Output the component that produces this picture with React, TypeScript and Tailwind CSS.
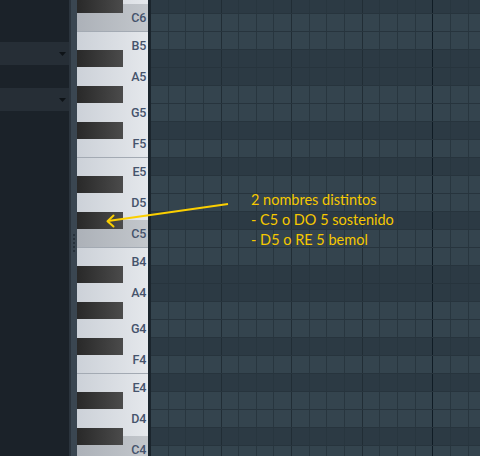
import React from "react";

const SCALE = [0, 2, 3, 5, 7, 8, 11]; // C harmonic minor highlight

// rows from C#6 (85) down to C4 (60)
const rows = Array.from({ length: 26 }, (_, i) => 85 - i);

// visible white keys, top to bottom (first one is cut off)
const whiteKeys = [
  { name: "D6", h: "h-[9px]", label: false },
  { name: "C6", h: "h-[27px]", label: true },
  { name: "B5", h: "h-[27px]", label: true },
  { name: "A5", h: "h-[36px]", label: true },
  { name: "G5", h: "h-[36px]", label: true },
  { name: "F5", h: "h-[27px]", label: true },
  { name: "E5", h: "h-[27px]", label: true },
  { name: "D5", h: "h-[36px]", label: true },
  { name: "C5", h: "h-[27px]", label: true },
  { name: "B4", h: "h-[27px]", label: true },
  { name: "A4", h: "h-[36px]", label: true },
  { name: "G4", h: "h-[36px]", label: true },
  { name: "F4", h: "h-[27px]", label: true },
  { name: "E4", h: "h-[27px]", label: true },
  { name: "D4", h: "h-[36px]", label: true },
  { name: "C4", h: "h-[27px]", label: true },
];

const blackTops = [
  "top-[1px]",
  "top-[55px]",
  "top-[91px]",
  "top-[127px]",
  "top-[181px]",
  "top-[217px]",
  "top-[271px]",
  "top-[307px]",
  "top-[343px]",
  "top-[397px]",
  "top-[433px]",
];

const cellLine = (n: number) => {
  if (n === 16) return "border-[#101c25]";
  if (n % 4 === 0) return "border-[#212d35]";
  return "border-[#28363f]";
};

const Dropdown: React.FC = () => (
  <div className="h-[23px] bg-[#262e36] flex items-center justify-end pr-[3px]">
    <svg width="7" height="4" viewBox="0 0 7 4">
      <polygon points="0,0 7,0 3.5,4" fill="#0e1317" />
    </svg>
  </div>
);

const PianoKeys: React.FC = () => (
  <div className="relative w-[71px] h-[468px] -mt-[5px] flex flex-col">
    {whiteKeys.map((k) => {
      const isC = k.name.startsWith("C");
      const sep = k.name.startsWith("B") || k.name.startsWith("E");
      return (
        <div
          key={k.name}
          className={`${k.h} shrink-0 flex items-center justify-end pr-[2px] pt-[2px] ${
            isC
              ? "bg-gradient-to-r from-[#acb1b8] to-[#c3c7cc]"
              : "bg-gradient-to-r from-[#ccd1d8] to-[#e5e8ec]"
          } ${sep ? "border-t border-[#a3aab3]" : ""}`}
        >
          {k.label && (
            <span className="text-[12.5px] leading-none tracking-[-0.3px] font-medium text-[#45536c] font-['Roboto',sans-serif]">
              {k.name}
            </span>
          )}
        </div>
      );
    })}
    {blackTops.map((t) => (
      <div
        key={t}
        className={`absolute left-0 ${t} w-[46px] h-[17px] bg-gradient-to-r from-[#292929] to-[#4b4b4b]`}
      />
    ))}
  </div>
);

const Grid: React.FC = () => (
  <div className="-mt-[5px] flex flex-col">
    {rows.map((p) => {
      const inScale = SCALE.includes(p % 12);
      return (
        <div
          key={p}
          className={`h-[18px] shrink-0 flex border-t border-[#27343d] ${
            inScale ? "bg-[#34444e]" : "bg-[#2c3a44]"
          }`}
        >
          {Array.from({ length: 19 }, (_, j) => (
            <div
              key={j}
              className={`w-[17.65px] shrink-0 h-full border-r ${cellLine(j + 1)}`}
            />
          ))}
        </div>
      );
    })}
  </div>
);

export default function App() {
  return (
    <div className="relative w-[480px] h-[456px] overflow-hidden flex bg-[#1b2229]">
      {/* left browser panel */}
      <div className="w-[69px] shrink-0 flex flex-col pt-[42px] gap-[23px] bg-[#1b2229]">
        <Dropdown />
        <Dropdown />
      </div>

      {/* splitter */}
      <div className="w-[8px] shrink-0 border-l-2 border-[#2b343d] bg-[#3a4651] flex flex-col items-center pt-[234px] gap-[2px]">
        {[0, 1, 2, 3, 4].map((d) => (
          <div key={d} className="w-[2px] h-[2px] bg-[#26303a]" />
        ))}
      </div>

      {/* keyboard */}
      <div className="w-[71px] shrink-0 overflow-hidden">
        <PianoKeys />
      </div>
      <div className="w-[3px] shrink-0 bg-[#1b252d]" />

      {/* note grid */}
      <div className="flex-1 overflow-hidden">
        <Grid />
      </div>

      {/* annotation */}
      <svg
        className="absolute inset-0 pointer-events-none"
        width="480"
        height="456"
        viewBox="0 0 480 456"
      >
        <line x1="228" y1="204" x2="108" y2="221" stroke="#fbcf00" strokeWidth="2" />
        <polyline
          points="113.5,215.5 107.5,221.2 113.5,226.5"
          fill="none"
          stroke="#fbcf00"
          strokeWidth="2"
          strokeLinecap="round"
          strokeLinejoin="round"
        />
      </svg>
      <div className="absolute left-[251px] top-[190px] text-[14.5px] leading-[20px] text-[#f6c800] font-['Lato',sans-serif] pointer-events-none">
        <div>2 nombres distintos</div>
        <div>- C5 o DO 5 sostenido</div>
        <div>- D5 o RE 5 bemol</div>
      </div>
    </div>
  );
}
